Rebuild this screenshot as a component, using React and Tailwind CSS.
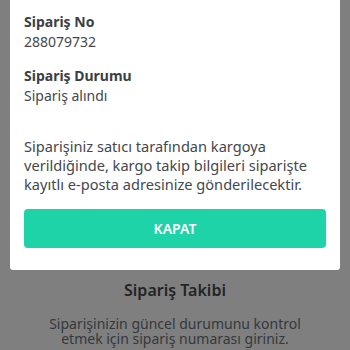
import React from 'react';

export default function App() {
  return (
    <div className="h-[350px] w-[350px] overflow-hidden bg-[#7f7f7f] flex flex-col" style={{ fontFamily: '"Noto Sans", sans-serif' }}>
      <div className="mx-[10px] bg-white rounded-b-[3px] px-[14px] pt-[12px] pb-[22px]">
        <div className="text-[14px] font-bold text-[#3b3f46] leading-[20px]">Sipariş No</div>
        <div className="text-[14px] text-[#44474d] leading-[20px]">288079732</div>
        <div className="mt-[14px] text-[14px] font-bold text-[#3b3f46] leading-[20px]">Sipariş Durumu</div>
        <div className="text-[14px] text-[#44474d] leading-[20px]">Sipariş alındı</div>
        <p className="mt-[31px] text-[14.6px] text-[#44474d] leading-[19px]">
          Siparişiniz satıcı tarafından kargoya verildiğinde, kargo takip bilgileri siparişte kayıtlı e-posta adresinize gönderilecektir.
        </p>
        <button className="mt-[15px] w-full h-[39px] rounded-[4px] bg-[#1dd3a7] text-white text-[14px] font-semibold">
          KAPAT
        </button>
      </div>
      <div className="mt-[9px] text-center text-[16px] leading-[22px] font-semibold text-[#222428]">Sipariş Takibi</div>
      <div className="mt-[15px] px-[40px] text-center text-[14px] leading-[15px] text-[#35383c]">
        Siparişinizin güncel durumunu kontrol etmek için sipariş numarası giriniz.
      </div>
    </div>
  );
}
